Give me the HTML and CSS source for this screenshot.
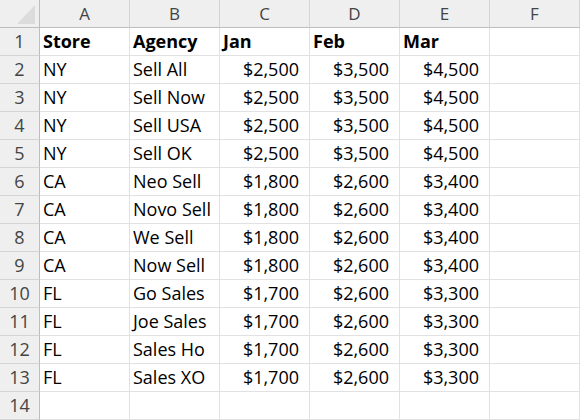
FILE: index.html
```html
<!DOCTYPE html>
<html lang="en">
<head>
  <meta charset="UTF-8">
  <title>Sheet1</title>
  <link rel="stylesheet" href="styles.css">
</head>
<body>
  <div class="sheet">
    <div class="corner"><span class="tri"></span></div>
    <div class="col-head">A</div>
    <div class="col-head">B</div>
    <div class="col-head">C</div>
    <div class="col-head">D</div>
    <div class="col-head">E</div>
    <div class="col-head">F</div>

    <div class="row-head">1</div>
    <div class="cell bold">Store</div>
    <div class="cell bold">Agency</div>
    <div class="cell bold">Jan</div>
    <div class="cell bold">Feb</div>
    <div class="cell bold">Mar</div>
    <div class="cell"></div>

    <div class="row-head">2</div>
    <div class="cell">NY</div><div class="cell">Sell All</div>
    <div class="cell num">$2,500</div><div class="cell num">$3,500</div><div class="cell num">$4,500</div><div class="cell"></div>

    <div class="row-head">3</div>
    <div class="cell">NY</div><div class="cell">Sell Now</div>
    <div class="cell num">$2,500</div><div class="cell num">$3,500</div><div class="cell num">$4,500</div><div class="cell"></div>

    <div class="row-head">4</div>
    <div class="cell">NY</div><div class="cell">Sell USA</div>
    <div class="cell num">$2,500</div><div class="cell num">$3,500</div><div class="cell num">$4,500</div><div class="cell"></div>

    <div class="row-head">5</div>
    <div class="cell">NY</div><div class="cell">Sell OK</div>
    <div class="cell num">$2,500</div><div class="cell num">$3,500</div><div class="cell num">$4,500</div><div class="cell"></div>

    <div class="row-head">6</div>
    <div class="cell">CA</div><div class="cell">Neo Sell</div>
    <div class="cell num">$1,800</div><div class="cell num">$2,600</div><div class="cell num">$3,400</div><div class="cell"></div>

    <div class="row-head">7</div>
    <div class="cell">CA</div><div class="cell">Novo Sell</div>
    <div class="cell num">$1,800</div><div class="cell num">$2,600</div><div class="cell num">$3,400</div><div class="cell"></div>

    <div class="row-head">8</div>
    <div class="cell">CA</div><div class="cell">We Sell</div>
    <div class="cell num">$1,800</div><div class="cell num">$2,600</div><div class="cell num">$3,400</div><div class="cell"></div>

    <div class="row-head">9</div>
    <div class="cell">CA</div><div class="cell">Now Sell</div>
    <div class="cell num">$1,800</div><div class="cell num">$2,600</div><div class="cell num">$3,400</div><div class="cell"></div>

    <div class="row-head">10</div>
    <div class="cell">FL</div><div class="cell">Go Sales</div>
    <div class="cell num">$1,700</div><div class="cell num">$2,600</div><div class="cell num">$3,300</div><div class="cell"></div>

    <div class="row-head">11</div>
    <div class="cell">FL</div><div class="cell">Joe Sales</div>
    <div class="cell num">$1,700</div><div class="cell num">$2,600</div><div class="cell num">$3,300</div><div class="cell"></div>

    <div class="row-head">12</div>
    <div class="cell">FL</div><div class="cell">Sales Ho</div>
    <div class="cell num">$1,700</div><div class="cell num">$2,600</div><div class="cell num">$3,300</div><div class="cell"></div>

    <div class="row-head">13</div>
    <div class="cell">FL</div><div class="cell">Sales XO</div>
    <div class="cell num">$1,700</div><div class="cell num">$2,600</div><div class="cell num">$3,300</div><div class="cell"></div>

    <div class="row-head">14</div>
    <div class="cell"></div><div class="cell"></div>
    <div class="cell"></div><div class="cell"></div><div class="cell"></div><div class="cell"></div>
  </div>
</body>
</html>
```
FILE: styles.css
```css
body {
  margin: 0;
  padding: 0;
  background: #fff;
  font-family: 'Open Sans', 'Noto Sans', sans-serif;
  color: #000;
}
.sheet {
  display: grid;
  grid-template-columns: 40px repeat(6, 90px);
  grid-auto-rows: 28px;
  width: 580px;
  overflow: hidden;
}
.sheet > div {
  box-sizing: border-box;
  border-right: 1px solid #e1e1e1;
  border-bottom: 1px solid #e1e1e1;
  white-space: nowrap;
  overflow: hidden;
}
.corner {
  position: relative;
  background: #efefef;
  border-right-color: #bdbdbd !important;
  border-bottom-color: #bdbdbd !important;
}
.corner .tri {
  position: absolute;
  right: 4px;
  bottom: 3px;
  width: 0;
  height: 0;
  border-left: 18px solid transparent;
  border-bottom: 19px solid #dcdcdc;
}
.corner::before {
  content: "";
  position: absolute;
  right: -1px;
  top: 0;
  width: 1px;
  height: 3px;
  background: #000;
}
.col-head {
  background: #efefef;
  color: #444;
  font-size: 17px;
  line-height: 27px;
  text-align: center;
  border-right-color: #d4d4d4 !important;
  border-bottom-color: #bdbdbd !important;
}
.row-head {
  background: #efefef;
  color: #444;
  font-size: 18px;
  line-height: 27px;
  text-align: center;
  border-right-color: #bdbdbd !important;
  border-bottom-color: #d4d4d4 !important;
}
.cell {
  font-size: 18px;
  line-height: 27px;
  padding-left: 3px;
}
.bold {
  font-weight: bold;
}
.num {
  text-align: right;
  padding-left: 0;
  padding-right: 10px;
}
```
